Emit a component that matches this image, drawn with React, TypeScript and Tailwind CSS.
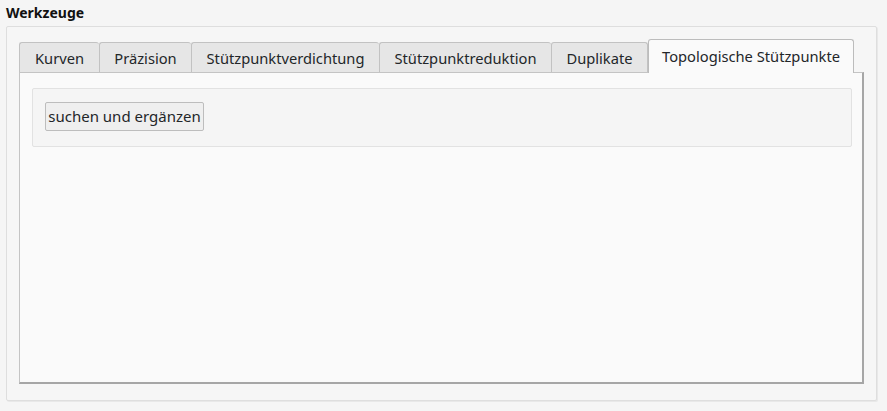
const tabs = [
  { label: "Kurven", w: "w-[80px]" },
  { label: "Präzision", w: "w-[92px]" },
  { label: "Stützpunktverdichtung", w: "w-[188px]" },
  { label: "Stützpunktreduktion", w: "w-[172px]" },
  { label: "Duplikate", w: "w-[97px] border-r" },
];

export default function App() {
  return (
    <div className="w-[887px] h-[411px] overflow-hidden bg-[#f5f5f5] font-['Noto_Sans',sans-serif] text-[#232629]">
      {/* group box title */}
      <div className="h-[26px] pl-[6px] pt-[3px] text-[14px] font-bold leading-[20px] text-[#111]">
        Werkzeuge
      </div>

      {/* group box */}
      <div className="ml-[6px] w-[871px] h-[375px] rounded-[2px] border border-[#dedede] bg-[#f6f6f6] pl-[12px] pr-[12px] pt-[12px] shadow-[1px_1px_0_#e8e8e8]">
        {/* tab bar */}
        <div className="flex items-end h-[33px]">
          {tabs.map((t) => (
            <div
              key={t.label}
              className={`${t.w} h-[30px] flex items-center justify-center rounded-t-[3px] border-l border-t border-[#c2c2c2] bg-[#e6e6e6] pt-[2px] text-[14.7px] leading-none`}
            >
              {t.label}
            </div>
          ))}
          <div className="relative z-10 w-[206px] h-[34px] -mb-px flex items-center justify-center rounded-t-[3px] border border-b-0 border-[#bcbcbc] bg-[#fafafa] pb-[1px] text-[14.7px] leading-none">
            Topologische Stützpunkte
          </div>
        </div>

        {/* tab pane */}
        <div className="w-[845px] h-[312px] border-l border-t border-[#c4c4c4] border-r-2 border-b-2 border-r-[#a6a6a6] border-b-[#a6a6a6] bg-[#fafafa] pl-[12px] pt-[15px] pr-[10px]">
          <div className="h-[59px] rounded-[2px] border border-[#e2e2e2] bg-[#f5f5f5] pl-[12px] pt-[13px]">
            <button className="h-[29px] w-[159px] rounded-[2px] border border-[#bdbdbd] bg-[#efefef] text-[15px] leading-none text-[#232629]">
              suchen und ergänzen
            </button>
          </div>
        </div>
      </div>
    </div>
  );
}
